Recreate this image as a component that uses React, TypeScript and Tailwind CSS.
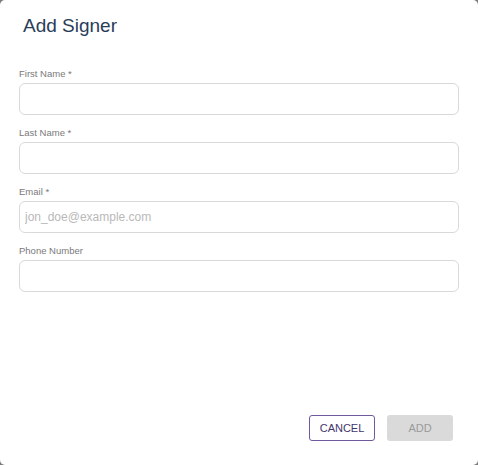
import React from "react";

const FIELDS: { label: string; required?: boolean; placeholder?: string }[] = [
    { label: "First Name", required: true },
    { label: "Last Name", required: true },
    { label: "Email", required: true, placeholder: "jon_doe@example.com" },
    { label: "Phone Number" },
];

export default function App() {
    return (
        <div className="h-[465px] w-[478px] bg-[#7a7a7a]" style={{ fontFamily: '"Liberation Sans", Arial, sans-serif' }}>
            <div className="flex h-full flex-col rounded-[5px] bg-white">
                <h2 className="mt-[14px] pl-[23px] text-[19px] leading-[24px] text-[#2a3d58]">Add Signer</h2>
                <div className="mt-[30px] flex flex-col gap-[12px] px-[19px]">
                    {FIELDS.map((f) => (
                        <div key={f.label} className="flex flex-col gap-[3px]">
                            <label className="text-[9.5px] leading-[12px] text-[#7a7a7a]">
                                {f.label}
                                {f.required ? " *" : ""}
                            </label>
                            <input
                                placeholder={f.placeholder}
                                className="h-[32px] w-full rounded-[6px] border border-[#d9d9d9] px-[5px] text-[12px] text-[#333] outline-none placeholder:text-[#b9b9b9]"
                            />
                        </div>
                    ))}
                </div>
                <div className="flex-1" />
                <div className="mb-[24px] flex justify-end gap-[12px] pr-[25px]">
                    <button className="h-[26px] w-[66px] rounded-[3px] border border-[#6f5a9e] text-[11px] text-[#43366e]">
                        CANCEL
                    </button>
                    <button disabled className="h-[26px] w-[66px] rounded-[3px] bg-[#dadada] text-[11px] text-[#9a9a9a]">
                        ADD
                    </button>
                </div>
            </div>
        </div>
    );
}
